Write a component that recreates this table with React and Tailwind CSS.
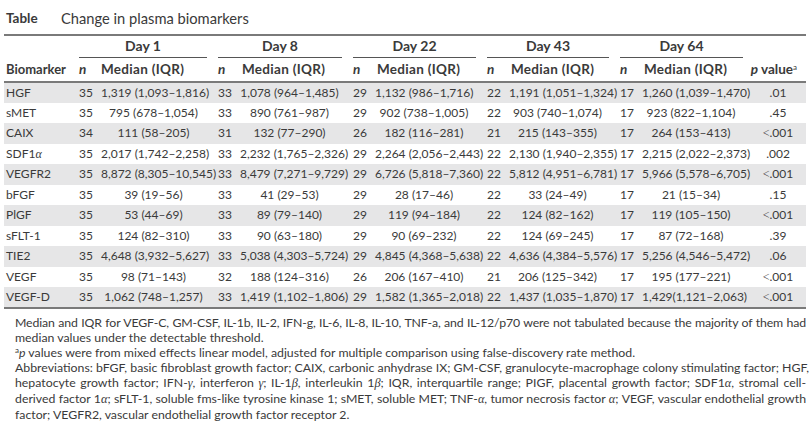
import React from 'react'

const rows = [
  ['HGF', ['35', '1,319 (1,093–1,816)'], ['33', '1,078 (964–1,485)'], ['29', '1,132 (986–1,716)'], ['22', '1,191 (1,051–1,324)'], ['17', '1,260 (1,039–1,470)'], '.01'],
  ['sMET', ['35', '795 (678–1,054)'], ['33', '890 (761–987)'], ['29', '902 (738–1,005)'], ['22', '903 (740–1,074)'], ['17', '923 (822–1,104)'], '.45'],
  ['CAIX', ['34', '111 (58–205)'], ['31', '132 (77–290)'], ['26', '182 (116–281)'], ['21', '215 (143–355)'], ['17', '264 (153–413)'], '<.001'],
  ['SDF1α', ['35', '2,017 (1,742–2,258)'], ['33', '2,232 (1,765–2,326)'], ['29', '2,264 (2,056–2,443)'], ['22', '2,130 (1,940–2,355)'], ['17', '2,215 (2,022–2,373)'], '.002'],
  ['VEGFR2', ['35', '8,872 (8,305–10,545)'], ['33', '8,479 (7,271–9,729)'], ['29', '6,726 (5,818–7,360)'], ['22', '5,812 (4,951–6,781)'], ['17', '5,966 (5,578–6,705)'], '<.001'],
  ['bFGF', ['35', '39 (19–56)'], ['33', '41 (29–53)'], ['29', '28 (17–46)'], ['22', '33 (24–49)'], ['17', '21 (15–34)'], '.15'],
  ['PlGF', ['35', '53 (44–69)'], ['33', '89 (79–140)'], ['29', '119 (94–184)'], ['22', '124 (82–162)'], ['17', '119 (105–150)'], '<.001'],
  ['sFLT-1', ['35', '124 (82–310)'], ['33', '90 (63–180)'], ['29', '90 (69–232)'], ['22', '124 (69–245)'], ['17', '87 (72–168)'], '.39'],
  ['TIE2', ['35', '4,648 (3,932–5,627)'], ['33', '5,038 (4,303–5,724)'], ['29', '4,845 (4,368–5,638)'], ['22', '4,636 (4,384–5,576)'], ['17', '5,256 (4,546–5,472)'], '.06'],
  ['VEGF', ['35', '98 (71–143)'], ['32', '188 (124–316)'], ['26', '206 (167–410)'], ['21', '206 (125–342)'], ['17', '195 (177–221)'], '<.001'],
  ['VEGF-D', ['35', '1,062 (748–1,257)'], ['33', '1,419 (1,102–1,806)'], ['29', '1,582 (1,365–2,018)'], ['22', '1,437 (1,035–1,870)'], ['17', '1,429(1,121–2,063)'], '<.001'],
]

const days = ['Day 1', 'Day 8', 'Day 22', 'Day 43', 'Day 64']

const Greek = ({ children }) => (
  <i className="font-['Liberation_Serif',serif]">{children}</i>
)

const Name = ({ name }) => {
  if (name === 'SDF1α') return <>SDF1<Greek>α</Greek></>
  return name
}

const Line = ({ children, full, tight }) => (
  <div className={`whitespace-nowrap ${full ? 'text-justify [text-align-last:justify]' : ''} ${tight ? 'tracking-[-0.12px]' : ''}`}>{children}</div>
)

export default function App() {
  return (
    <div className="w-[812px] h-[426px] bg-white text-[#3a3a3a] font-[Lato,sans-serif] overflow-hidden">
      <div className="h-[34px] flex items-center pl-[6px] pt-[2px]">
        <span className="font-bold text-[13.5px] w-[55px]">Table</span>
        <span className="text-[14.7px]">Change in plasma biomarkers</span>
      </div>

      <div className="pl-[4px] pr-[6px]">
        <table className="w-full table-fixed border-collapse text-[12px]">
          <colgroup>
            <col className="w-[69px]" />
            <col className="w-[28px]" /><col className="w-[111px]" />
            <col className="w-[28px]" /><col className="w-[107px]" />
            <col className="w-[28px]" /><col className="w-[106px]" />
            <col className="w-[28px]" /><col className="w-[105px]" />
            <col className="w-[28px]" /><col className="w-[106px]" />
            <col />
          </colgroup>
          <thead>
            <tr className="h-[23px] border-t-2 border-[#7a7a7a]">
              <th />
              {days.map((d) => (
                <th key={d} colSpan={2} className="p-0 align-bottom font-bold text-[14px]">
                  <div className="ml-[6px] mr-[5px] border-b border-[#555] pb-[2px] leading-[18px]">{d}</div>
                </th>
              ))}
              <th />
            </tr>
            <tr className="h-[24px] border-b-2 border-[#7a7a7a] text-[13.5px]">
              <th className="text-left pl-[2px] font-bold text-[13px]">Biomarker</th>
              {days.map((d, j) => (
                <React.Fragment key={d}>
                  <th className="text-left pl-[6px] font-bold italic">n</th>
                  <th className={`text-left font-bold whitespace-nowrap tracking-[0.3px] ${j === 0 ? 'pl-0' : 'pl-[2px]'}`}>Median (IQR)</th>
                </React.Fragment>
              ))}
              <th className="text-right pr-[9px] font-bold whitespace-nowrap">
                <i>p</i> value<sup className="text-[8px] font-normal">a</sup>
              </th>
            </tr>
          </thead>
          <tbody>
            {rows.map((r, i) => (
              <tr key={r[0]} className={`h-[20.5px] ${i % 2 === 0 ? 'bg-[#e6e6e7]' : ''} ${i === rows.length - 1 ? 'border-b-2 border-[#7a7a7a]' : ''}`}>
                <td className="pl-[2px] p-0">
                  <Name name={r[0]} />
                </td>
                {r.slice(1, 6).map((c, j) => (
                  <React.Fragment key={j}>
                    <td className="pl-[6px] p-0">{c[0]}</td>
                    <td className={`text-center whitespace-nowrap p-0 ${j === 0 ? 'pr-[6px]' : 'pr-[8px]'}`}>{c[1]}</td>
                  </React.Fragment>
                ))}
                <td className="text-center p-0 pl-[2px]">
                  {r[6].startsWith('<') ? (
                    <><span className="font-['Liberation_Serif',serif]">&lt;</span>{r[6].slice(1)}</>
                  ) : r[6]}
                </td>
              </tr>
            ))}
          </tbody>
        </table>
      </div>

      <div className="pl-[15px] pr-[6px] pt-[6px] text-[12.3px] leading-[15px]">
        <Line full tight>Median and IQR for VEGF-C, GM-CSF, IL-1b, IL-2, IFN-g, IL-6, IL-8, IL-10, TNF-a, and IL-12/p70 were not tabulated because the majority of them had</Line>
        <Line>median values under the detectable threshold.</Line>
        <Line><sup className="text-[8px]">a</sup><i>p</i> values were from mixed effects linear model, adjusted for multiple comparison using false-discovery rate method.</Line>
        <Line full>Abbreviations: bFGF, basic fibroblast growth factor; CAIX, carbonic anhydrase IX; GM-CSF, granulocyte-macrophage colony stimulating factor; HGF,</Line>
        <Line full>hepatocyte growth factor; IFN-<Greek>γ</Greek>, interferon <Greek>γ</Greek>; IL-1<Greek>β</Greek>, interleukin 1<Greek>β</Greek>; IQR, interquartile range; PIGF, placental growth factor; SDF1<Greek>α</Greek>, stromal cell-</Line>
        <Line full>derived factor 1<Greek>α</Greek>; sFLT-1, soluble fms-like tyrosine kinase 1; sMET, soluble MET; TNF-<Greek>α</Greek>, tumor necrosis factor <Greek>α</Greek>; VEGF, vascular endothelial growth</Line>
        <Line>factor; VEGFR2, vascular endothelial growth factor receptor 2.</Line>
      </div>
    </div>
  )
}
